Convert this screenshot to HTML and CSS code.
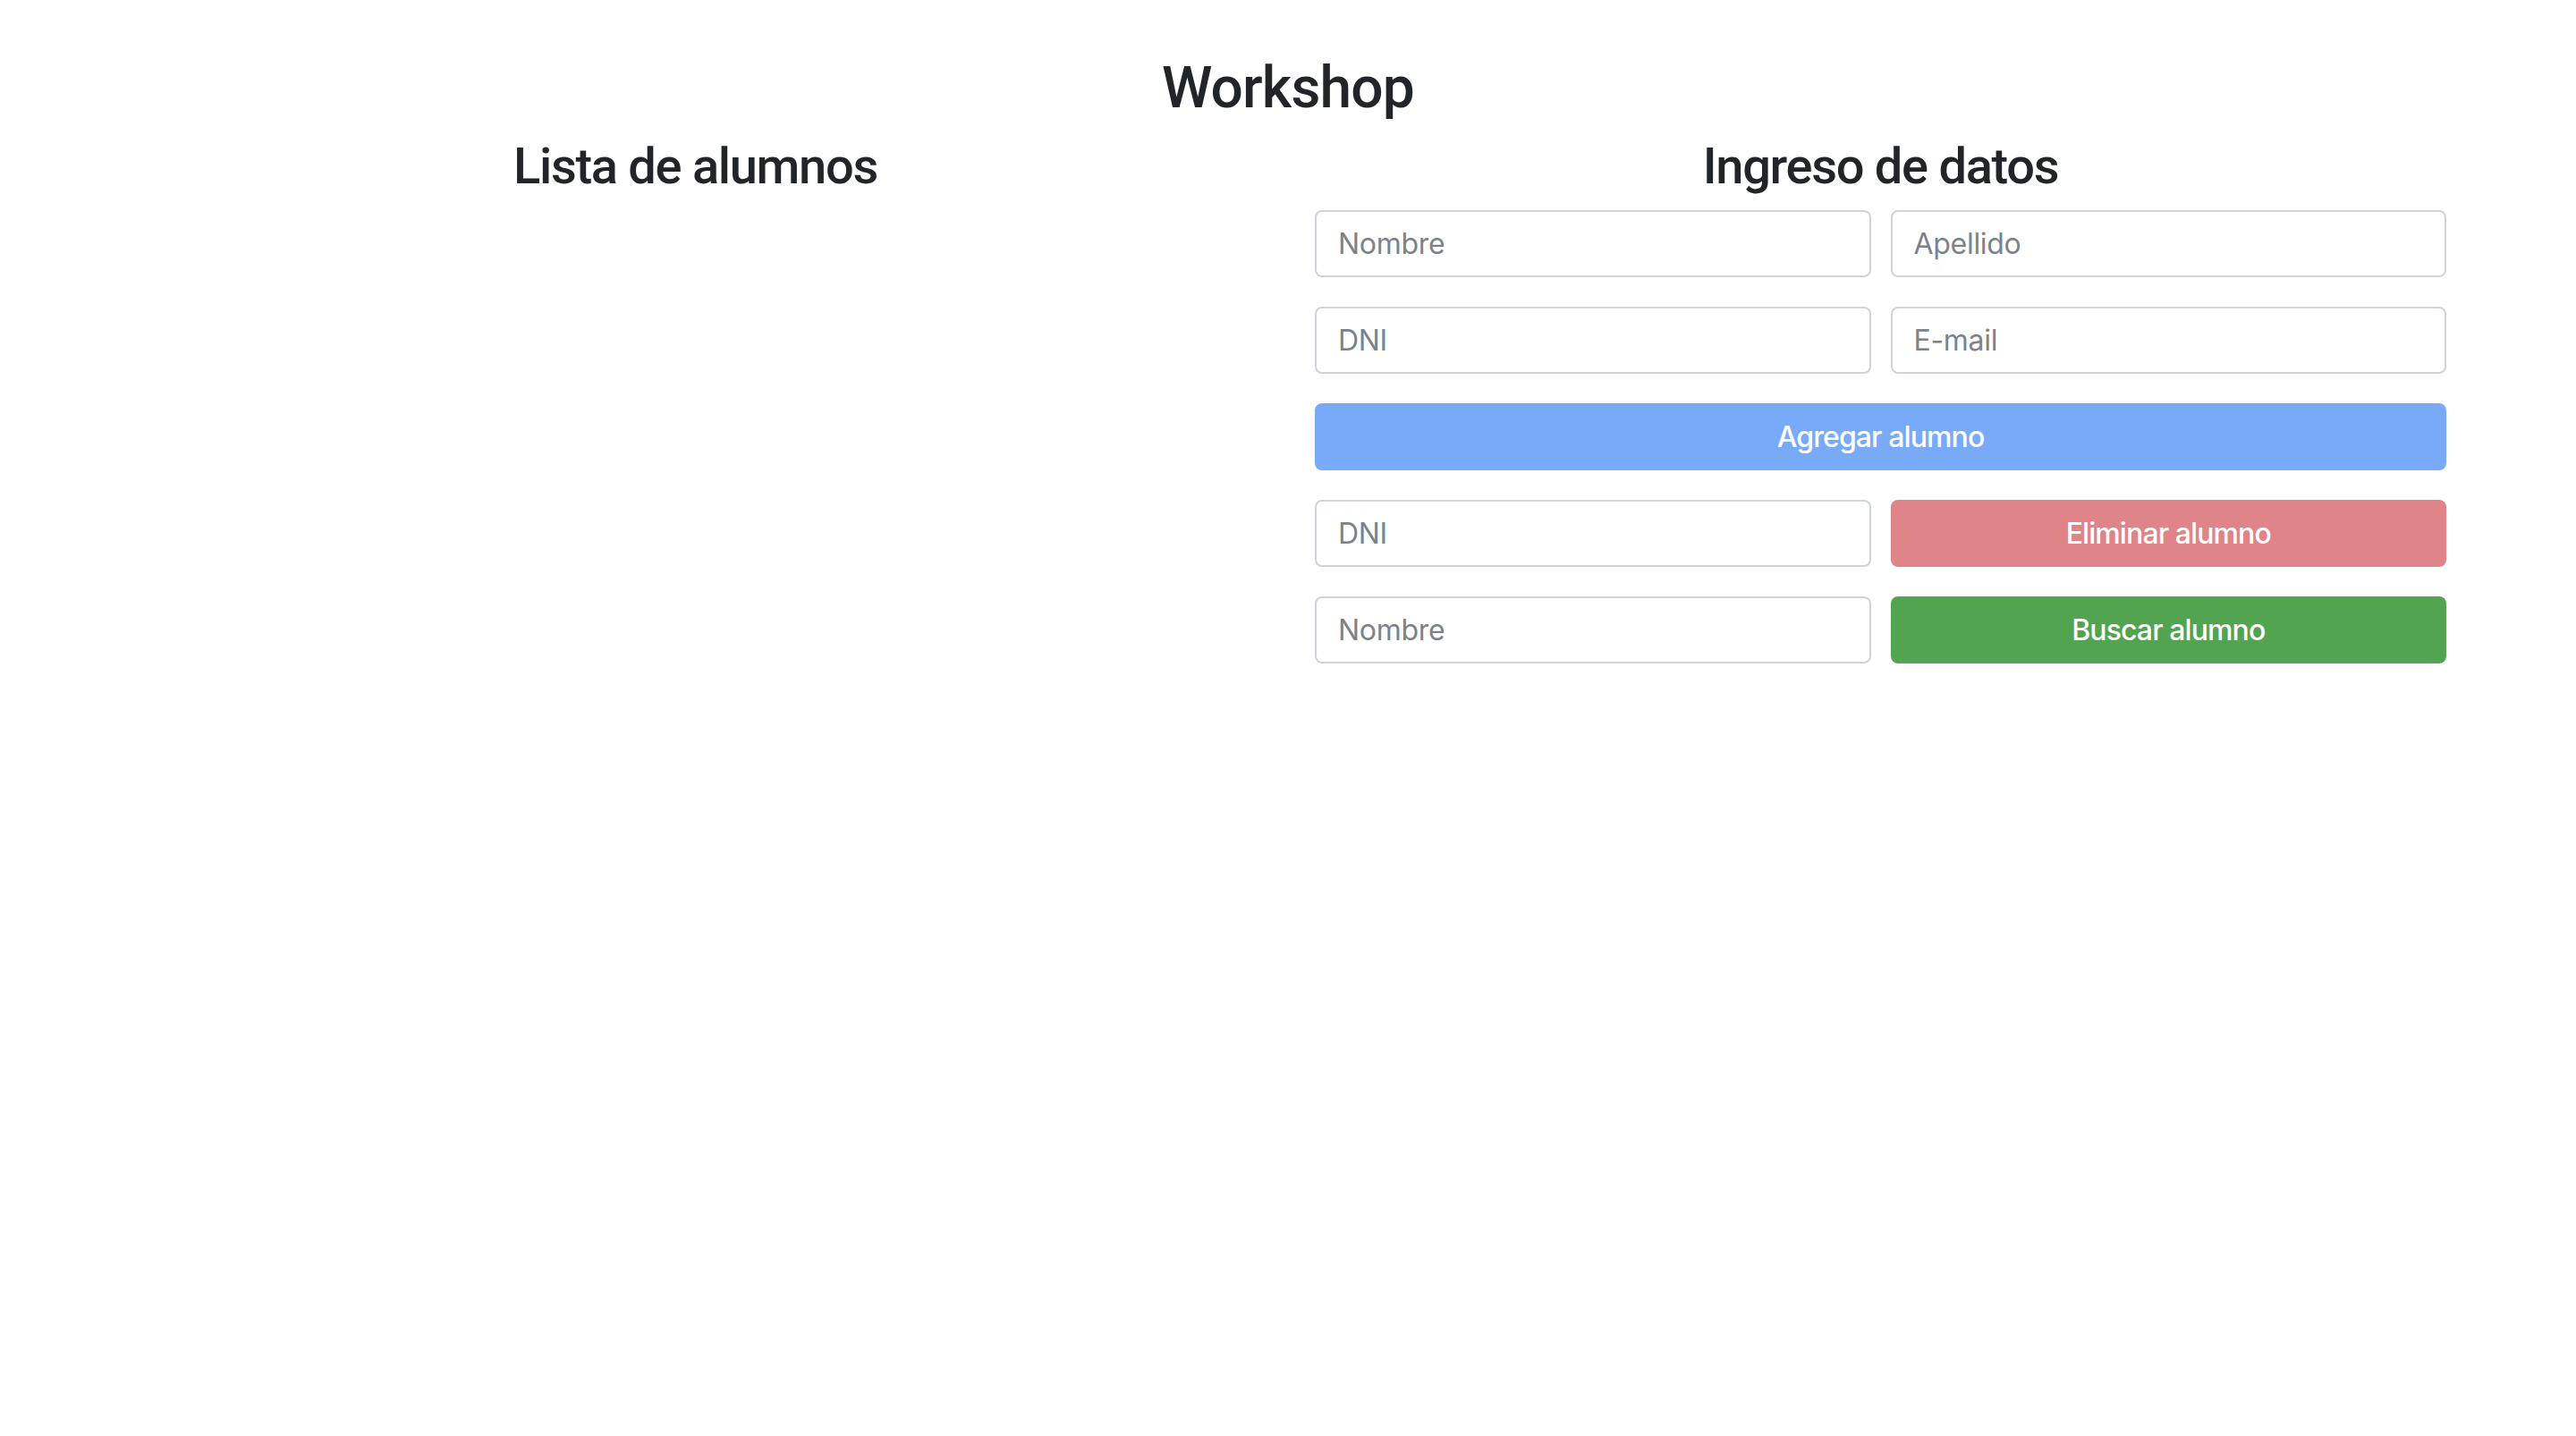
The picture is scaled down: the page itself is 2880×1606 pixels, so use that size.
FILE: index.html
```html
<!DOCTYPE html>
<html lang="es">
<head>
<meta charset="utf-8">
<title>Workshop</title>
<link rel="stylesheet" href="styles.css">
</head>
<body>
<div class="page">
  <h1 class="title">Workshop</h1>
  <div class="cols">
    <section class="col">
      <h2 class="heading">Lista de alumnos</h2>
    </section>
    <section class="col">
      <h2 class="heading">Ingreso de datos</h2>
      <form class="form">
        <input class="field" type="text" placeholder="Nombre">
        <input class="field" type="text" placeholder="Apellido">
        <input class="field" type="text" placeholder="DNI">
        <input class="field" type="text" placeholder="E-mail">
        <button class="btn btn-blue wide" type="button">Agregar alumno</button>
        <input class="field" type="text" placeholder="DNI">
        <button class="btn btn-red" type="button">Eliminar alumno</button>
        <input class="field" type="text" placeholder="Nombre">
        <button class="btn btn-green" type="button">Buscar alumno</button>
      </form>
    </section>
  </div>
</div>
</body>
</html>
```

FILE: styles.css
```css
* { box-sizing: border-box; }
html, body { margin: 0; padding: 0; background: #ffffff; }
body {
  font-family: Inter, "Liberation Sans", Arial, sans-serif;
  color: #212529;
}
.page {
  width: 2650px;
  margin: 0 auto;
  padding-top: 61px;
}
.title {
  margin: 0 0 15px 0;
  font-family: Roboto, "Liberation Sans", Arial, sans-serif;
  font-size: 64px;
  line-height: 1.2;
  font-weight: 500;
  letter-spacing: -0.8px;
  text-align: center;
}
.cols {
  display: grid;
  grid-template-columns: 1fr 1fr;
}
.col {
  padding: 0 30px;
}
.heading {
  margin: 0 0 15px 0;
  font-family: Roboto, "Liberation Sans", Arial, sans-serif;
  font-size: 56px;
  line-height: 1.2;
  font-weight: 500;
  letter-spacing: -1.3px;
  text-align: center;
}
.form {
  display: grid;
  grid-template-columns: 1fr 1fr;
  column-gap: 22px;
  row-gap: 33px;
}
.field {
  height: 75px;
  width: 100%;
  border: 2px solid #ced4da;
  border-radius: 8px;
  padding: 0 24px;
  font-family: inherit;
  font-size: 32px;
  letter-spacing: -0.3px;
  color: #495057;
  background: #fff;
  outline: none;
}
.field::placeholder { color: #7b828a; opacity: 1; }
.btn {
  height: 75px;
  width: 100%;
  border: 0;
  border-radius: 8px;
  font-family: inherit;
  font-size: 32px;
  font-weight: 500;
  letter-spacing: -0.9px;
  color: #ffffff;
  text-align: center;
  padding: 0 24px;
}
.wide { grid-column: 1 / span 2; }
.btn-blue { background: #79aaf8; }
.btn-red { background: #df8488; }
.btn-green { background: #52a450; }
```
